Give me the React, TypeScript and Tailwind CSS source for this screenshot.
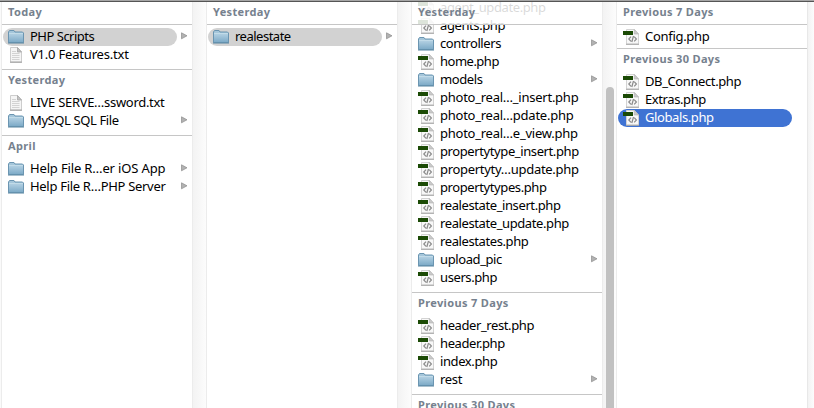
import React from "react";

type Kind = "folder" | "txt" | "php";
type Item = { name: string; kind: Kind; state?: "path" | "active"; tracking?: string };
type Section = { title: string; items: Item[]; tight?: boolean };

const php = (name: string, tracking?: string): Item => ({ name, kind: "php", tracking });
const folder = (name: string, tracking?: string): Item => ({ name, kind: "folder", tracking });

const columns: Section[][] = [
  [
    {
      title: "Today",
      items: [
        { name: "PHP Scripts", kind: "folder", state: "path", tracking: "tracking-[-0.5px]" },
        { name: "V1.0 Features.txt", kind: "txt", tracking: "tracking-[-0.2px]" },
      ],
    },
    {
      title: "Yesterday",
      items: [
        { name: "LIVE SERVE…ssword.txt", kind: "txt", tracking: "tracking-[-0.3px]" },
        folder("MySQL SQL File"),
      ],
    },
    {
      title: "April",
      items: [
        folder("Help File R…er iOS App", "tracking-[-0.15px]"),
        folder("Help File R…PHP Server", "tracking-[-0.3px]"),
      ],
    },
  ],
  [
    {
      title: "Yesterday",
      items: [{ name: "realestate", kind: "folder", state: "path", tracking: "tracking-[-0.5px]" }],
    },
  ],
  [
    {
      title: "Yesterday",
      items: [
        php("agent_update.php"),
        php("agents.php"),
        folder("controllers"),
        php("home.php", "tracking-[-0.5px]"),
        folder("models"),
        php("photo_real…_insert.php", "tracking-[-0.25px]"),
        php("photo_real…pdate.php", "tracking-[-0.25px]"),
        php("photo_real…e_view.php", "tracking-[-0.25px]"),
        php("propertytype_insert.php"),
        php("propertyty…update.php", "tracking-[-0.3px]"),
        php("propertytypes.php"),
        php("realestate_insert.php"),
        php("realestate_update.php"),
        php("realestates.php"),
        folder("upload_pic"),
        php("users.php"),
      ],
    },
    {
      title: "Previous 7 Days",
      items: [php("header_rest.php"), php("header.php"), php("index.php"), folder("rest", "tracking-[-0.3px]")],
    },
    { title: "Previous 30 Days", items: [] },
  ],
  [
    { title: "Previous 7 Days", items: [php("Config.php", "tracking-[-0.3px]")], tight: true },
    {
      title: "Previous 30 Days",
      items: [php("DB_Connect.php"), php("Extras.php"), { name: "Globals.php", kind: "php", state: "active" }],
    },
  ],
];

function Icon({ kind }: { kind: Kind }) {
  if (kind === "folder")
    return (
      <svg width="16" height="16" viewBox="0 0 16 16" className="shrink-0">
        <defs>
          <linearGradient id="folderFront" x1="0" y1="0" x2="0" y2="1">
            <stop offset="0" stopColor="#b4d1e3" />
            <stop offset="1" stopColor="#7ba9c6" />
          </linearGradient>
        </defs>
        <path d="M.5 13.5V3L1.5 1.5H6L7 3H14.5L15.5 4V13.5Z" fill="#a5c6da" stroke="#6b95b1" />
        <path d="M1 4.5H15V13.5H1Z" fill="url(#folderFront)" />
        <path d="M1 4.5H15" stroke="#c8deeb" strokeWidth=".8" />
        <path d="M0 14H16" stroke="#56839f" />
      </svg>
    );
  return (
    <svg width="16" height="16" viewBox="0 0 16 16" className="shrink-0">
      {kind === "txt" ? (
        <>
          <path d="M2.5 .5H9.5L13.5 5V15H2.5Z" fill="#f5f5f5" stroke="#cdcdcd" />
          <path d="M2 15.2H14" stroke="#9c9c9c" />
          <path d="M9.5 .5V5H13.5Z" fill="#c4c4c4" stroke="#a0a0a0" strokeWidth=".7" />
          <path d="M4 4.5H8M4 6.5H11.5M4 8.5H11.5M4 10.5H11.5M4 12.5H11.5" stroke="#d3d3d3" />
        </>
      ) : (
        <>
          <path d="M3.5 .5H11.5L15.5 5V15H3.5Z" fill="#f8f8f8" stroke="#d3d3d3" />
          <path d="M3 15.3H16" stroke="#a6a6a6" />
          <path d="M11.3 .5V5H15.5Z" fill="#cbcbcb" stroke="#b0b0b0" strokeWidth=".6" />
          <path
            d="M8 7.6L5.8 10L8 12.4M11.2 7.6L13.4 10L11.2 12.4M10.5 7L8.8 13"
            fill="none"
            stroke="#8a8a8a"
            strokeWidth="1.2"
          />
          <path d="M0 2H10V6H0Z" fill="#1b4a05" />
        </>
      )}
    </svg>
  );
}

function Row({ item }: { item: Item }) {
  const pill =
    item.state === "active" ? "bg-[#3f73d3] text-white" : item.state === "path" ? "bg-[#d2d2d2] text-black" : "text-black";
  return (
    <div className="flex h-[18px] items-center pl-px">
      <div className={`flex h-[18px] w-[174px] shrink-0 items-center rounded-full pl-[5px] ${pill}`}>
        <Icon kind={item.kind} />
        <span
          className={`mb-0.5 ml-[6px] text-[13px] leading-[18px] whitespace-pre ${item.tracking ?? "tracking-[-0.4px]"}`}
        >
          {item.name}
        </span>
      </div>
      {item.kind === "folder" && (
        <svg width="7" height="8" viewBox="0 0 7 8" className="mb-0.5 ml-1 shrink-0">
          <path d="M.5 .8L6 3.8L.5 6.8Z" fill="#b2b2b2" stroke="#8c8c8c" strokeWidth=".7" />
        </svg>
      )}
    </div>
  );
}

function Title({ text }: { text: string }) {
  return <span className="text-[11px] leading-[20px] font-bold tracking-[0.35px] whitespace-pre text-[#76818e]">{text}</span>;
}

function Column({ sections, scrolled }: { sections: Section[]; scrolled?: boolean }) {
  return (
    <div className="relative h-[406px] w-[190px] shrink-0 overflow-hidden bg-white">
      <div className="absolute inset-x-0 top-0 z-10 h-[23px] border-b border-[#c6c6c6] bg-white/85 pl-[6px]">
        <div className="flex h-[20px] items-center">
          <Title text={sections[0].title} />
        </div>
      </div>
      <div className={scrolled ? "-mt-[3px]" : "pt-[26px]"}>
        {sections.map((s, i) => (
          <div key={s.title} className={s.tight ? "pb-[2px]" : "pb-[5px]"}>
            {i > 0 && (
              <div className="h-[25px] border-t border-[#c6c6c6] pl-[6px]">
                <div className="flex h-[20px] items-center">
                  <Title text={s.title} />
                </div>
              </div>
            )}
            {s.items.map((item) => (
              <Row key={item.name} item={item} />
            ))}
          </div>
        ))}
      </div>
    </div>
  );
}

function Track({ thumb }: { thumb?: boolean }) {
  return (
    <div className="flex h-[406px] w-[15px] shrink-0 justify-center border-x border-[#ececec] bg-linear-to-r from-[#f3f3f3] to-[#fcfcfc]">
      {thumb && <div className="mt-[85px] h-[330px] w-2 rounded-full bg-[#c1c1c1]" />}
    </div>
  );
}

export default function App() {
  return (
    <div className="h-[408px] w-[814px] overflow-hidden bg-white font-['Noto_Sans',sans-serif]">
      <div className="h-[2px] border-b border-[#555555] bg-[#a6a6a6]" />
      <div className="flex h-[406px]">
        <div className="w-[2px] shrink-0 border-r border-[#ececec] bg-[#fafafa]" />
        <Column sections={columns[0]} />
        <Track />
        <Column sections={columns[1]} />
        <Track />
        <Column sections={columns[2]} scrolled />
        <Track thumb />
        <Column sections={columns[3]} />
        <div className="w-[7px] shrink-0 border-l border-[#e8e8e8] bg-linear-to-r from-[#f3f3f3] to-[#fcfcfc]" />
      </div>
    </div>
  );
}
